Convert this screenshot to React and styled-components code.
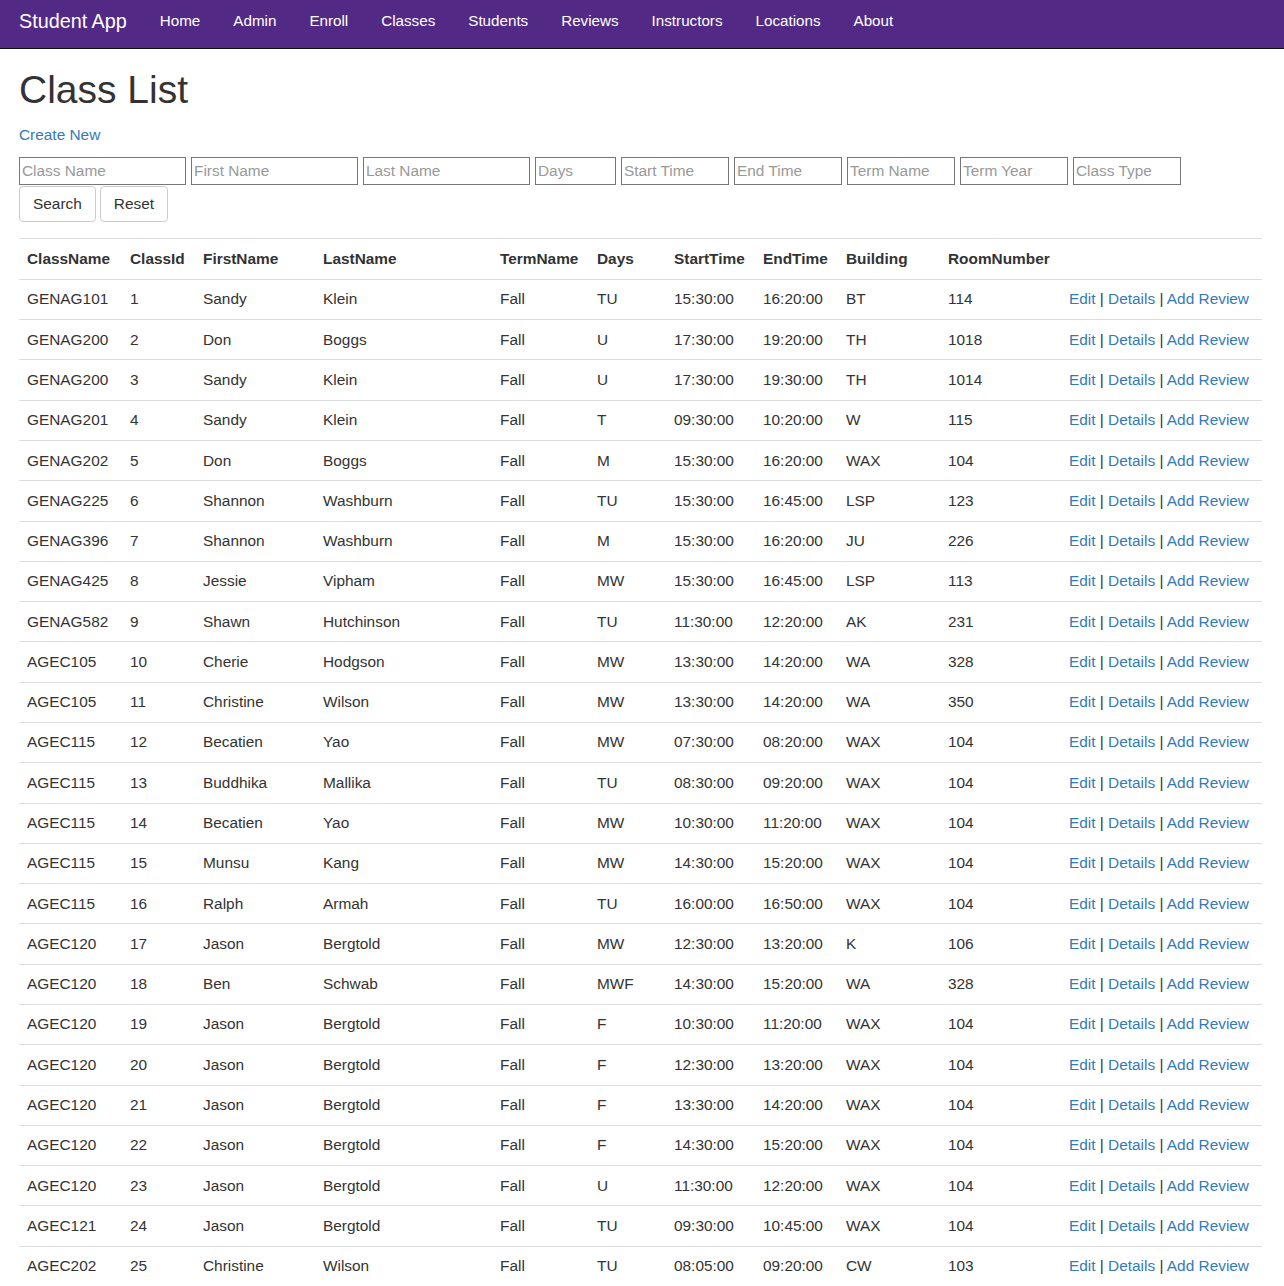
import React from 'react';
import styled, { createGlobalStyle } from 'styled-components';

const GlobalStyle = createGlobalStyle`
  body {
    margin: 0;
    font-family: "Liberation Sans", Arial, Helvetica, sans-serif;
    font-size: 15.4px;
    color: #333;
    background: #fff;
  }
  * { box-sizing: border-box; }
`;

const Navbar = styled.nav`
  height: 49px;
  background: #522a86;
  border-bottom: 1px solid #111;
  display: flex;
  align-items: center;
  padding-left: 19px;
`;

const Brand = styled.a`
  color: #fff;
  font-size: 19.8px;
  text-decoration: none;
  margin-top: -6px;
  padding-right: 16.5px;
`;

const NavList = styled.ul`
  display: flex;
  list-style: none;
  margin: 0;
  padding: 0;
  margin-top: -7px;
`;

const NavItem = styled.li`
  a {
    display: block;
    padding: 0 16.5px;
    color: #fff;
    font-size: 15.2px;
    text-decoration: none;
  }
`;

const Container = styled.div`
  padding: 0 22px 0 19px;
`;

const Title = styled.h1`
  font-size: 39px;
  font-weight: 500;
  line-height: 1.1;
  margin: 20px 0 12px;
  color: #333;
`;

const Link = styled.a`
  color: #337ab7;
  text-decoration: none;
`;

const CreateLine = styled.p`
  margin: 0 0 11px;
  line-height: 22px;
`;

const Filters = styled.form`
  display: flex;
  flex-direction: column;
  width: 1180px;
`;

const FilterRow = styled.div`
  display: flex;
  gap: 5px;
`;

const Field = styled.input`
  width: ${p => p.$w}px;
  height: 28px;
  border: 1px solid #767676;
  padding: 1px 2px;
  font-family: "Liberation Sans", Arial, sans-serif;
  font-size: 15.4px;
  color: #333;
  &::placeholder { color: #999; }
`;

const ButtonRow = styled.div`
  display: flex;
  gap: 4px;
  margin-top: 1px;
`;

const Button = styled.button`
  height: 36px;
  padding: 0 13px;
  background: #fff;
  border: 1px solid #ccc;
  border-radius: 4px;
  font-family: "Liberation Sans", Arial, sans-serif;
  font-size: 15.4px;
  color: #333;
`;

const Table = styled.table`
  width: 1243px;
  margin-top: 16px;
  border-collapse: collapse;
  table-layout: fixed;
  border-top: 1px solid #ddd;
`;

const Th = styled.th`
  text-align: left;
  font-weight: bold;
  padding: 8px 8px 9px;
  line-height: 23px;
  border-bottom: 1px solid #ddd;
  white-space: nowrap;
`;

const Td = styled.td`
  padding: 7.5px 8px 8.5px;
  line-height: 23.28px;
  border-bottom: 1px solid #ddd;
  white-space: nowrap;
`;

const Sep = styled.span`
  color: #333;
`;

const navLinks = ['Home', 'Admin', 'Enroll', 'Classes', 'Students', 'Reviews', 'Instructors', 'Locations', 'About'];

const fields = [
  ['Class Name', 167], ['First Name', 167], ['Last Name', 167], ['Days', 81],
  ['Start Time', 108], ['End Time', 108], ['Term Name', 108], ['Term Year', 108], ['Class Type', 108],
];

const cols = [103, 73, 120, 177, 97, 77, 89, 83, 102, 121, 201];
const heads = ['ClassName', 'ClassId', 'FirstName', 'LastName', 'TermName', 'Days', 'StartTime', 'EndTime', 'Building', 'RoomNumber', ''];

const rows = [
  ['GENAG101', 1, 'Sandy', 'Klein', 'TU', '15:30:00', '16:20:00', 'BT', 114],
  ['GENAG200', 2, 'Don', 'Boggs', 'U', '17:30:00', '19:20:00', 'TH', 1018],
  ['GENAG200', 3, 'Sandy', 'Klein', 'U', '17:30:00', '19:30:00', 'TH', 1014],
  ['GENAG201', 4, 'Sandy', 'Klein', 'T', '09:30:00', '10:20:00', 'W', 115],
  ['GENAG202', 5, 'Don', 'Boggs', 'M', '15:30:00', '16:20:00', 'WAX', 104],
  ['GENAG225', 6, 'Shannon', 'Washburn', 'TU', '15:30:00', '16:45:00', 'LSP', 123],
  ['GENAG396', 7, 'Shannon', 'Washburn', 'M', '15:30:00', '16:20:00', 'JU', 226],
  ['GENAG425', 8, 'Jessie', 'Vipham', 'MW', '15:30:00', '16:45:00', 'LSP', 113],
  ['GENAG582', 9, 'Shawn', 'Hutchinson', 'TU', '11:30:00', '12:20:00', 'AK', 231],
  ['AGEC105', 10, 'Cherie', 'Hodgson', 'MW', '13:30:00', '14:20:00', 'WA', 328],
  ['AGEC105', 11, 'Christine', 'Wilson', 'MW', '13:30:00', '14:20:00', 'WA', 350],
  ['AGEC115', 12, 'Becatien', 'Yao', 'MW', '07:30:00', '08:20:00', 'WAX', 104],
  ['AGEC115', 13, 'Buddhika', 'Mallika', 'TU', '08:30:00', '09:20:00', 'WAX', 104],
  ['AGEC115', 14, 'Becatien', 'Yao', 'MW', '10:30:00', '11:20:00', 'WAX', 104],
  ['AGEC115', 15, 'Munsu', 'Kang', 'MW', '14:30:00', '15:20:00', 'WAX', 104],
  ['AGEC115', 16, 'Ralph', 'Armah', 'TU', '16:00:00', '16:50:00', 'WAX', 104],
  ['AGEC120', 17, 'Jason', 'Bergtold', 'MW', '12:30:00', '13:20:00', 'K', 106],
  ['AGEC120', 18, 'Ben', 'Schwab', 'MWF', '14:30:00', '15:20:00', 'WA', 328],
  ['AGEC120', 19, 'Jason', 'Bergtold', 'F', '10:30:00', '11:20:00', 'WAX', 104],
  ['AGEC120', 20, 'Jason', 'Bergtold', 'F', '12:30:00', '13:20:00', 'WAX', 104],
  ['AGEC120', 21, 'Jason', 'Bergtold', 'F', '13:30:00', '14:20:00', 'WAX', 104],
  ['AGEC120', 22, 'Jason', 'Bergtold', 'F', '14:30:00', '15:20:00', 'WAX', 104],
  ['AGEC120', 23, 'Jason', 'Bergtold', 'U', '11:30:00', '12:20:00', 'WAX', 104],
  ['AGEC121', 24, 'Jason', 'Bergtold', 'TU', '09:30:00', '10:45:00', 'WAX', 104],
  ['AGEC202', 25, 'Christine', 'Wilson', 'TU', '08:05:00', '09:20:00', 'CW', 103],
];

const App = () => {
  return (
    <div>
      <GlobalStyle />
      <Navbar>
        <Brand href="#">Student App</Brand>
        <NavList>
          {navLinks.map(l => (
            <NavItem key={l}><a href="#">{l}</a></NavItem>
          ))}
        </NavList>
      </Navbar>
      <Container>
        <Title>Class List</Title>
        <CreateLine><Link href="#">Create New</Link></CreateLine>
        <Filters onSubmit={e => e.preventDefault()}>
          <FilterRow>
            {fields.map(([ph, w]) => (
              <Field key={ph} placeholder={ph} $w={w} />
            ))}
          </FilterRow>
          <ButtonRow>
            <Button type="submit">Search</Button>
            <Button type="button">Reset</Button>
          </ButtonRow>
        </Filters>
        <Table>
          <colgroup>
            {cols.map((w, i) => <col key={i} style={{ width: w }} />)}
          </colgroup>
          <thead>
            <tr>
              {heads.map((h, i) => <Th key={i}>{h}</Th>)}
            </tr>
          </thead>
          <tbody>
            {rows.map(r => (
              <tr key={r[1]}>
                <Td>{r[0]}</Td>
                <Td>{r[1]}</Td>
                <Td>{r[2]}</Td>
                <Td>{r[3]}</Td>
                <Td>Fall</Td>
                <Td>{r[4]}</Td>
                <Td>{r[5]}</Td>
                <Td>{r[6]}</Td>
                <Td>{r[7]}</Td>
                <Td>{r[8]}</Td>
                <Td>
                  <Link href="#">Edit</Link> <Sep>|</Sep> <Link href="#">Details</Link> <Sep>|</Sep> <Link href="#">Add Review</Link>
                </Td>
              </tr>
            ))}
          </tbody>
        </Table>
      </Container>
    </div>
  );
};

export default App;
